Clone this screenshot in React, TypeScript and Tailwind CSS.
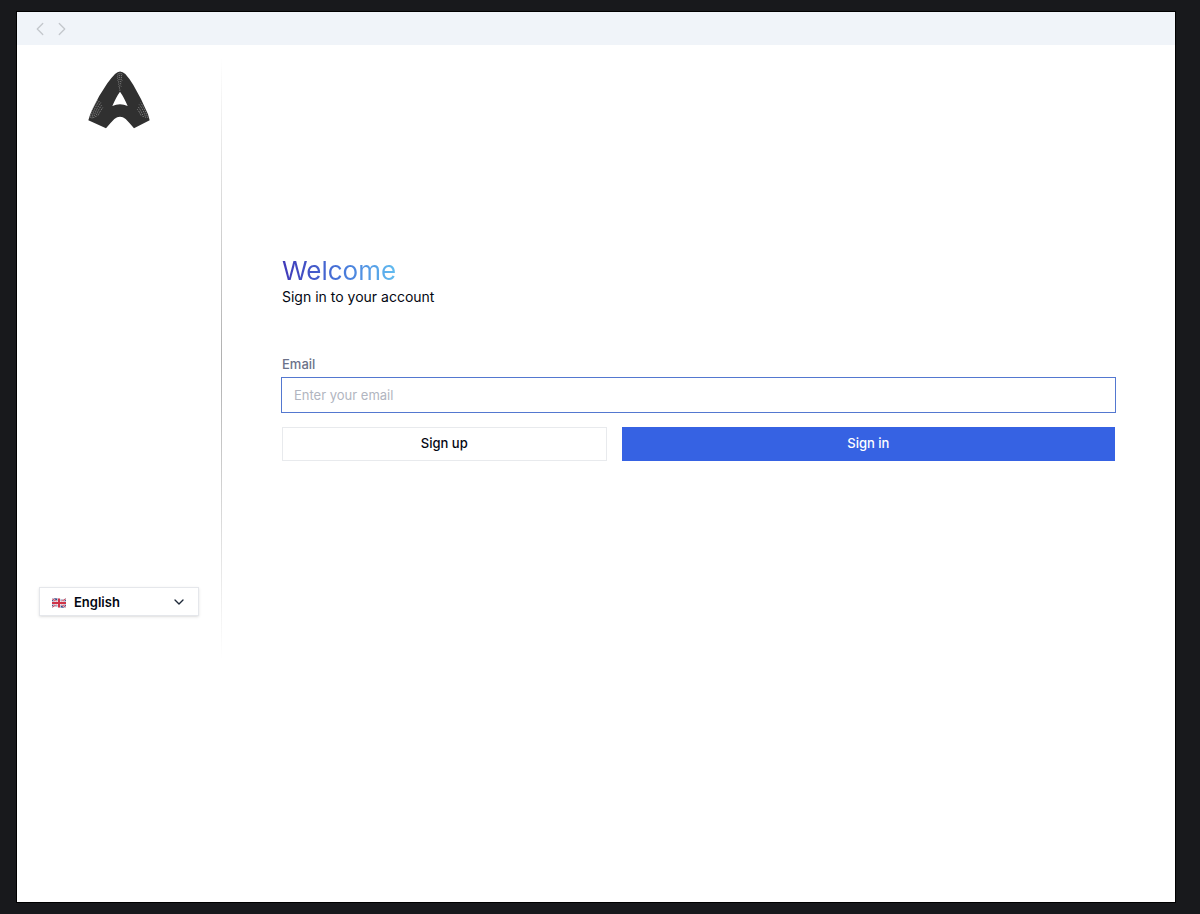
import { ChevronDown, ChevronLeft, ChevronRight } from "lucide-react";

function Logo() {
  return (
    <svg viewBox="24 33 186 174" className="h-[58px] w-[62px]" role="img" aria-label="Logo">
      <path
        fillRule="evenodd"
        fill="#303030"
        d="M105 42Q120 27 136 42Q148 55 160 75Q185 117 204 163L209 181L162 205Q148 188 137 177Q120 164 103 177Q92 188 78 205L25 181Q30 163 36 150Q56 107 82 70Q95 52 105 42ZM120 95Q109 110 97 138Q120 127 143 138Q131 110 120 95Z"
      />
      <g fill="none" stroke="#c4c4c4" strokeWidth="2" strokeDasharray="3 3">
        <path d="M113 43Q120 37 127 43M112 49Q120 43 128 49M112 55Q120 49 128 55M113 61Q120 55 127 61M114 67Q120 62 126 67M115 73Q120 69 125 73M116 79Q120 76 124 79M117 85Q120 82 123 85M118 91Q120 89 122 91" />
        <path d="M31 173Q35 145 54 118M36 175Q40 148 58 123M41 174Q46 151 62 128M47 171Q53 152 65 135M54 166Q61 153 68 143" />
        <path d="M203 173Q195 147 182 128M197 173Q190 148 178 134M190 171Q184 152 174 140M183 166Q177 153 171 147" />
      </g>
    </svg>
  );
}

function UnitedKingdomFlag() {
  return (
    <svg viewBox="0 0 28 20" className="mt-[3px] h-[10px] w-[14px] shrink-0" aria-hidden="true">
      <path fill="#394985" d="M0 2Q7-1 14 2T28 1V18Q21 21 14 18T0 19Z" />
      <path stroke="#f4e8ec" strokeWidth="4" d="M1 2L27 18M27 2L1 18" />
      <path stroke="#cf3c50" strokeWidth="2" d="M1 2L27 18M27 2L1 18" />
      <path stroke="#f4e8ec" strokeWidth="7" d="M14 1V19M0 10H28" />
      <path stroke="#cf3348" strokeWidth="4" d="M14 1V19M0 10H28" />
    </svg>
  );
}

function LanguagePicker() {
  return (
    <div className="flex h-[29px] items-center border border-gray-200 bg-white pr-[11px] pl-3 shadow-sm">
      <UnitedKingdomFlag />
      <select
        aria-label="Language"
        className="min-w-0 flex-1 appearance-none bg-transparent pl-2 text-[13px] leading-5 font-semibold text-gray-950 outline-none"
      >
        <option>English</option>
      </select>
      <ChevronDown className="size-4 shrink-0 text-gray-800" strokeWidth={2} aria-hidden="true" />
    </div>
  );
}

function SignInForm() {
  return (
    <form className="w-full" onSubmit={(event) => event.preventDefault()}>
      <h1 className="w-fit bg-linear-to-r from-[#4038b8] via-[#4673d8] to-[#63bdf0] bg-clip-text text-[26px] leading-7 text-transparent">
        Welcome
      </h1>
      <p className="text-sm leading-6 text-gray-950">Sign in to your account</p>
      <label htmlFor="email" className="mt-[47px] block text-[13px] leading-4 font-medium text-[#6b7289]">
        Email
      </label>
      <div className="-mx-px mt-[5px]">
        <input
          id="email"
          type="email"
          placeholder="Enter your email"
          className="block h-9 w-full border border-[#5478d0] bg-white px-3 text-[13px] text-gray-900 outline-none placeholder:text-[#b1b5c0]"
        />
      </div>
      <div className="mt-[14px] grid grid-cols-[325fr_494fr] gap-[15px] text-[13px] font-medium">
        <button type="button" className="h-[34px] border border-[#e8eaed] bg-white text-gray-950">
          Sign up
        </button>
        <button type="submit" className="h-[34px] bg-[#3662e3] text-white">
          Sign in
        </button>
      </div>
    </form>
  );
}

export default function App() {
  return (
    <div className="flex min-h-screen bg-[#18191c] pt-3 pr-[25px] pb-3 pl-[17px] font-['Inter',sans-serif]">
      <div className="flex flex-1 flex-col bg-white outline outline-black">
        <header className="flex h-[33px] items-center bg-[#f0f4f9] px-3 text-[#c3c7cc]">
          <button type="button" aria-label="Back">
            <ChevronLeft className="size-[22px]" strokeWidth={1.4} />
          </button>
          <button type="button" aria-label="Forward">
            <ChevronRight className="size-[22px]" strokeWidth={1.4} />
          </button>
        </header>
        <div className="flex min-h-[627px]">
          <aside className="flex w-[204px] shrink-0 flex-col justify-between px-[22px] pt-[26px] pb-14">
            <div className="flex justify-center">
              <Logo />
            </div>
            <LanguagePicker />
          </aside>
          <div className="my-3 w-px bg-linear-to-b from-transparent via-[#b0b0b0] to-transparent" />
          <main className="flex flex-1 items-center px-[60px]">
            <SignInForm />
          </main>
        </div>
      </div>
    </div>
  );
}
